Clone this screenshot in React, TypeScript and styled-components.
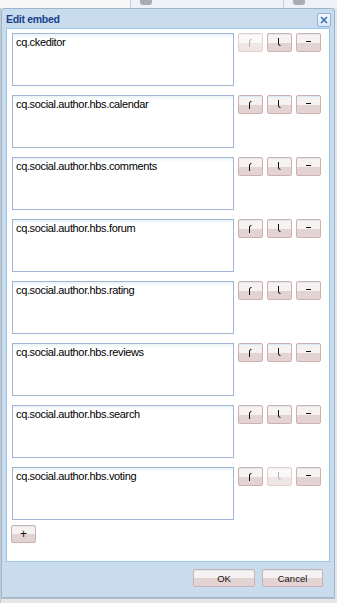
import styled, { createGlobalStyle, css } from "styled-components";

// ── Global ────────────────────────────────────────────────

const GlobalStyle = createGlobalStyle`
  html, body {
    margin: 0;
    padding: 0;
    background: #e4e6e9;
    font-family: "Liberation Sans", Arial, sans-serif;
  }
`;

// ── Page behind the dialog ────────────────────────────────

const Page = styled.div`
  width: 337px;
  height: 603px;
  overflow: hidden;
  background: linear-gradient(to right, #c9c9c9 0 1px, #e4e6e9 1px);
`;

const BackStrip = styled.div`
  height: 8px;
  display: flex;
  background: #f3f4f6;
`;

const BackCell = styled.div<{ w: number; first?: boolean }>`
  width: ${(p) => p.w}px;
  height: 100%;
  border-left: ${(p) => (p.first ? "none" : "1px solid #c4ccd6")};
  background: ${(p) => (p.first ? "#f7f7f7" : "#eef1f5")};
  display: flex;
  padding-left: 9px;
  box-sizing: border-box;

  &::before {
    content: "";
    display: ${(p) => (p.first ? "none" : "block")};
    width: 12px;
    height: 5px;
    border-radius: 0 0 3px 3px;
    background: #a9adb3;
  }
`;

// ── Window ────────────────────────────────────────────────

const Window = styled.div`
  margin-left: 1px;
  width: 334px;
  height: 590px;
  box-sizing: border-box;
  border: 1px solid #9db5cd;
  border-radius: 3px 3px 0 0;
  background: #c9dcee;
  display: flex;
  flex-direction: column;
  box-shadow: 0 1px 0 #b9bcc0;
`;

const Header = styled.div`
  height: 19px;
  flex: none;
  display: flex;
  align-items: center;
  justify-content: space-between;
  padding: 0 3px 0 4px;
`;

const Title = styled.span`
  font-size: 10.5px;
  font-weight: bold;
  letter-spacing: -0.3px;
  color: #15428b;
  padding-top: 1px;
`;

const CloseButton = styled.button`
  width: 14px;
  height: 14px;
  padding: 0;
  margin-top: 3px;
  border: 1px solid #8eb3da;
  border-radius: 2px;
  background: linear-gradient(#f4f8fd, #dde9f6);
  display: flex;
  align-items: center;
  justify-content: center;
`;

const Body = styled.div`
  height: 534px;
  flex: none;
  box-sizing: border-box;
  margin: 0 4px;
  border: 1px solid #99c6ef;
  background: #fff;
  padding: 4px 0 0 5px;
  display: flex;
  flex-direction: column;
`;

const Row = styled.div`
  display: flex;
  gap: 4px;
  height: 53px;
  margin-bottom: 9px;
`;

const Field = styled.div`
  width: 222px;
  height: 53px;
  box-sizing: border-box;
  border: 1px solid #a5b3d7;
  background: linear-gradient(#e8f3f3, #fff 4px);
  padding: 2px 3px;
  font-size: 11px;
  letter-spacing: -0.35px;
  line-height: 13px;
  color: #000;
`;

const Controls = styled.div`
  display: flex;
  gap: 4px;
  align-items: flex-start;
`;

const buttonFace = css`
  box-sizing: border-box;
  padding: 0;
  border: 1px solid #cdb0b0;
  border-radius: 2px;
  background: linear-gradient(
    #dbe9f5 0 1px,
    #f6f2f2 1px 52%,
    #e3d3d3 52% 100%
  );
  display: flex;
  align-items: center;
  justify-content: center;
  color: #111;
  font-family: "Liberation Sans", Arial, sans-serif;
`;

const IconButton = styled.button<{ disabled?: boolean }>`
  ${buttonFace};
  width: 25px;
  height: 19px;
  ${(p) =>
    p.disabled &&
    css`
      border-color: #e2cfcf;
      background: linear-gradient(
        #e9f1f8 0 1px,
        #faf8f8 1px 52%,
        #efe6e6 52% 100%
      );
      color: #b8b0b0;
    `}
`;

const AddButton = styled.button`
  ${buttonFace};
  width: 25px;
  height: 18px;
  margin: -4px 0 0 -1px;
  font-size: 12px;
  line-height: 1;
`;

const Footer = styled.div`
  flex: 1;
  display: flex;
  justify-content: flex-end;
  align-items: flex-start;
  gap: 7px;
  padding: 7px 11px 0 0;
`;

const TextButton = styled.button<{ w: number }>`
  ${buttonFace};
  width: ${(p) => p.w}px;
  height: 18px;
  font-size: 9.5px;
`;

// ── Icons ─────────────────────────────────────────────────

const UpIcon = () => (
  <svg width="5" height="9" viewBox="0 0 5 9">
    <path d="M1.5 9 V3 Q1.5 1.5 3.5 1.5" fill="none" stroke="currentColor" strokeWidth="1" />
  </svg>
);

const DownIcon = () => (
  <svg width="5" height="9" viewBox="0 0 5 9">
    <path d="M1.5 0 V6 Q1.5 7.5 3.5 7.5" fill="none" stroke="currentColor" strokeWidth="1" />
  </svg>
);

const MinusIcon = () => (
  <svg width="5" height="9" viewBox="0 0 5 9">
    <path d="M0 3.5 H5" stroke="currentColor" strokeWidth="1" />
  </svg>
);

const CloseIcon = () => (
  <svg width="8" height="8" viewBox="0 0 8 8">
    <path d="M1 1 L7 7 M7 1 L1 7" stroke="#3d6fb0" strokeWidth="1.6" />
  </svg>
);

// ── Component ─────────────────────────────────────────────

const embeds = [
  "cq.ckeditor",
  "cq.social.author.hbs.calendar",
  "cq.social.author.hbs.comments",
  "cq.social.author.hbs.forum",
  "cq.social.author.hbs.rating",
  "cq.social.author.hbs.reviews",
  "cq.social.author.hbs.search",
  "cq.social.author.hbs.voting",
];

export default function App() {
  return (
    <>
      <GlobalStyle />
      <Page>
        <BackStrip>
          <BackCell w={130} first />
          <BackCell w={153} />
          <BackCell w={54} />
        </BackStrip>

        <Window>
          <Header>
            <Title>Edit embed</Title>
            <CloseButton type="button" aria-label="Close">
              <CloseIcon />
            </CloseButton>
          </Header>

          <Body>
            {embeds.map((name, i) => (
              <Row key={name}>
                <Field>{name}</Field>
                <Controls>
                  <IconButton type="button" disabled={i === 0}>
                    <UpIcon />
                  </IconButton>
                  <IconButton type="button" disabled={i === embeds.length - 1}>
                    <DownIcon />
                  </IconButton>
                  <IconButton type="button">
                    <MinusIcon />
                  </IconButton>
                </Controls>
              </Row>
            ))}
            <AddButton type="button">+</AddButton>
          </Body>

          <Footer>
            <TextButton type="button" w={62}>
              OK
            </TextButton>
            <TextButton type="button" w={61}>
              Cancel
            </TextButton>
          </Footer>
        </Window>
      </Page>
    </>
  );
}
